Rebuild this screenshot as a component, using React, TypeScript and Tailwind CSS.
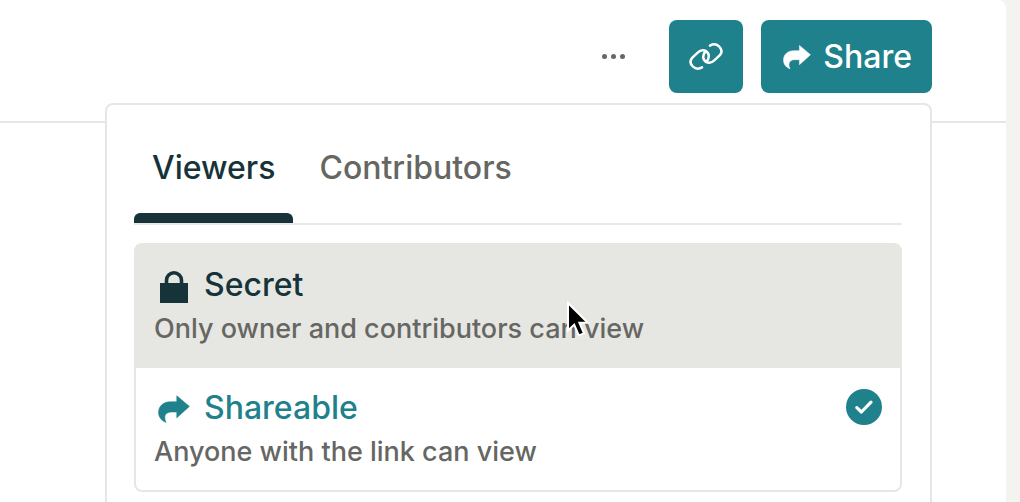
import React, { useState } from 'react';

type IconProps = { className?: string };

const ShareIcon: React.FC<IconProps> = ({ className }) => (
  <svg viewBox="0 0 32 28" fill="currentColor" className={className} aria-hidden="true">
    <path
      d="M18.8 .8 31.400 11.400 18.800 22.800V17h-5.200C9.200 17 6.800 19.200 6.800 22.600c0 1.800.4 3.400 1.200 4.800C3.200 25.600.6 22 .6 17.600.6 11 5.400 6.800 12.400 6.800h6.400z"
      stroke="currentColor"
      strokeWidth="0.6"
      strokeLinejoin="round"
    />
  </svg>
);

const LockIcon: React.FC<IconProps> = ({ className }) => (
  <svg viewBox="0 0 32 32" className={className} aria-hidden="true">
    <path d="M2 12h28v20H2z" fill="currentColor" />
    <path d="M8.500 13V9.300a7.500 7.500 0 0 1 15 0V13" fill="none" stroke="currentColor" strokeWidth="3.600" />
  </svg>
);

const LinkIcon: React.FC<IconProps> = ({ className }) => (
  <svg
    viewBox="0 0 34 27"
    fill="none"
    stroke="currentColor"
    strokeWidth="2.500"
    strokeLinecap="round"
    className={className}
    aria-hidden="true"
  >
    <path d="M13 24.400C10.200 26 6.400 25.800 4 23.600 1 20.800.8 17.400 3.400 14.600L8.700 9.600C11 7.400 14.400 6.600 17.200 8.400 20.600 10.600 20.800 15.600 17 19" />
    <path d="M21 2.600C23.800 1 27.600 1.200 30 3.400 33 6.200 33.200 9.600 30.600 12.400L25.300 17.400C23 19.600 19.600 20.400 16.800 18.600 13.400 16.400 13.200 11.400 17 8" />
  </svg>
);

const CheckIcon: React.FC<IconProps> = ({ className }) => (
  <svg viewBox="0 0 36 36" className={className} aria-hidden="true">
    <circle cx="18" cy="18" r="18" fill="currentColor" />
    <path
      d="M10.800 18.600 15.400 23 25 13.200"
      fill="none"
      stroke="white"
      strokeWidth="3.200"
      strokeLinecap="round"
      strokeLinejoin="round"
    />
  </svg>
);

const Cursor: React.FC<IconProps> = ({ className }) => (
  <svg viewBox="0 0 24 38" className={className} aria-hidden="true">
    <path
      d="M1 2v27.500l6.200-5.800 4.600 10.800 5.200-2.200-4.600-10.600h8.400z"
      fill="black"
      stroke="white"
      strokeWidth="2"
    />
  </svg>
);

const tabs = ['Viewers', 'Contributors'];

const options = [
  {
    id: 'secret',
    title: 'Secret',
    description: 'Only owner and contributors can view',
    icon: <LockIcon className="mt-1 h-8 w-8" />,
  },
  {
    id: 'shareable',
    title: 'Shareable',
    description: 'Anyone with the link can view',
    icon: <ShareIcon className="mt-0.5 h-7 w-8" />,
  },
];

const App: React.FC = () => {
  const [activeTab, setActiveTab] = useState('Viewers');
  const [selected, setSelected] = useState('shareable');
  const hovered = 'secret';

  return (
    <div className="h-screen overflow-hidden bg-[#f3f3ef] pr-3.5 font-['Inter','Liberation_Sans',sans-serif] font-medium">
      <div className="relative h-full overflow-hidden rounded-tr-lg bg-white">
        <header className="flex items-start justify-end border-b-2 border-[#e6e7e2] pt-5 pb-7 pr-[74px]">
          <button type="button" aria-label="More" className="mr-11 flex h-[73px] items-center gap-1 text-[#666663]">
            <span className="h-[5px] w-[5px] rounded-full bg-current" />
            <span className="h-[5px] w-[5px] rounded-full bg-current" />
            <span className="h-[5px] w-[5px] rounded-full bg-current" />
          </button>
          <button
            type="button"
            aria-label="Copy link"
            className="mr-[18px] flex h-[73px] w-[74px] items-center justify-center rounded-lg bg-[#1f818c] text-white"
          >
            <LinkIcon className="h-[27px] w-[34px]" />
          </button>
          <button
            type="button"
            className="flex h-[73px] items-center gap-3 rounded-lg bg-[#1f818c] pl-[22px] pr-5 text-[32px] leading-10 text-white"
          >
            <ShareIcon className="h-[26px] w-7" />
            Share
          </button>
        </header>

        <div className="absolute top-[103px] -bottom-4 left-[105px] right-[74px] rounded-lg border-2 border-[#e6e7e2] bg-white pl-[27px] pr-7 pt-[29px]">
          <div role="tablist" className="flex border-b-2 border-[#e9e9e7]">
            {tabs.map((tab) => (
              <button
                key={tab}
                type="button"
                role="tab"
                aria-selected={activeTab === tab}
                onClick={() => setActiveTab(tab)}
                className={`relative mr-2 px-[18px] pt-3.5 pb-[35px] text-[32px] leading-10 ${
                  activeTab === tab ? 'text-[#163339]' : 'text-[#666663]'
                }`}
              >
                {tab}
                {activeTab === tab && (
                  <span className="absolute inset-x-0 bottom-0 h-2.5 rounded-t-md bg-[#163339]" />
                )}
              </button>
            ))}
          </div>

          <div className="mt-[18px] rounded-lg border-2 border-[#e6e7e2]">
            {options.map((option) => (
              <button
                key={option.id}
                type="button"
                aria-pressed={selected === option.id}
                onClick={() => setSelected(option.id)}
                className={`relative flex w-full items-start justify-between px-[18px] pt-5 pb-[18px] text-left ${
                  hovered === option.id ? 'border-b border-[#e6e7e2] bg-[#e6e7e2]' : 'rounded-b-lg bg-white'
                }`}
              >
                <span>
                  <span
                    className={`flex items-center gap-3.5 pl-1 text-[32px] leading-10 ${
                      selected === option.id ? 'text-[#1f818c]' : 'text-[#163339]'
                    }`}
                  >
                    {option.icon}
                    {option.title}
                  </span>
                  <span className="mt-1 block text-[27px] leading-10 text-[#666663]">{option.description}</span>
                </span>
                {selected === option.id && <CheckIcon className="mt-px h-9 w-9 text-[#1f818c]" />}
                {hovered === option.id && <Cursor className="absolute left-[431px] top-14 h-[38px] w-6" />}
              </button>
            ))}
          </div>
        </div>
      </div>
    </div>
  );
};

export default App;
